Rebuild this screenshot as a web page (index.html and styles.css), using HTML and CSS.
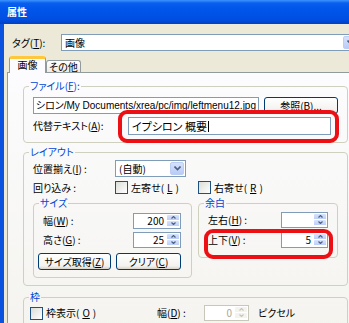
FILE: index.html
```html
<!DOCTYPE html>
<html lang="ja">
<head>
    <meta charset="UTF-8">
    <title>属性</title>
    <link rel="stylesheet" href="styles.css">
</head>
<body>
    <div class="window">
        <!-- タイトルバー -->
        <div class="titlebar">
            <span class="title">属性</span>
        </div>

        <div class="client">
            <div class="tag-row">
                <span class="tag-label">タグ(<u>T</u>):</span>
                <div class="combo combo-tag">
                    <span class="combo-text">画像</span>
                    <span class="drop"><svg width="7" height="5" viewBox="0 0 7 5"><polyline points="0.5,0.5 3.5,3.5 6.5,0.5" fill="none" stroke="#4D6185" stroke-width="1.6"/></svg></span>
                </div>
            </div>

            <div class="tabs">
                <div class="tab active">画像</div>
                <div class="tab">その他</div>
            </div>

            <div class="panel">
                <!-- ファイル -->
                <fieldset class="group group-file">
                    <legend>ファイル(<u>F</u>):</legend>
                    <div class="body">
                        <div class="row">
                            <div class="textbox path"><span>シロン/My Documents/xrea/pc/img/leftmenu12.jpg</span></div>
                            <button class="btn btn-browse">参照(<u>B</u>)...</button>
                        </div>
                        <div class="row row-alt">
                            <span class="label label-alt">代替テキスト(<u>A</u>):</span>
                            <div class="textbox alt">イプシロン 概要<span class="caret"></span></div>
                        </div>
                    </div>
                </fieldset>

                <!-- レイアウト -->
                <fieldset class="group group-layout">
                    <legend>レイアウト</legend>
                    <div class="body">
                        <div class="row row-align">
                            <span class="label label-layout">位置揃え(<u>I</u>) :</span>
                            <div class="combo combo-align">
                                <span class="combo-text">(自動)</span>
                                <span class="drop"><svg width="7" height="5" viewBox="0 0 7 5"><polyline points="0.5,0.5 3.5,3.5 6.5,0.5" fill="none" stroke="#4D6185" stroke-width="1.6"/></svg></span>
                            </div>
                        </div>
                        <div class="row row-wrap">
                            <span class="label label-layout">回り込み :</span>
                            <span class="checkitem check-left"><span class="check"></span>左寄せ(<u>L</u>)</span>
                            <span class="checkitem"><span class="check"></span>右寄せ(<u>R</u>)</span>
                        </div>

                        <div class="subgroups">
                            <fieldset class="group group-size">
                                <legend>サイズ</legend>
                                <div class="body">
                                    <div class="row">
                                        <span class="label label-size">幅(<u>W</u>) :</span>
                                        <div class="spin spin-size">
                                            <span class="spin-val">200</span>
                                            <span class="spin-btns">
                                                <span class="spin-btn"><svg width="5" height="3" viewBox="0 0 5 3"><polyline points="0.5,2.5 2.5,0.5 4.5,2.5" fill="none" stroke="#4D6185" stroke-width="1.2"/></svg></span>
                                                <span class="spin-btn"><svg width="5" height="3" viewBox="0 0 5 3"><polyline points="0.5,0.5 2.5,2.5 4.5,0.5" fill="none" stroke="#4D6185" stroke-width="1.2"/></svg></span>
                                            </span>
                                        </div>
                                    </div>
                                    <div class="row row-next">
                                        <span class="label label-size">高さ(<u>G</u>) :</span>
                                        <div class="spin spin-size">
                                            <span class="spin-val">25</span>
                                            <span class="spin-btns">
                                                <span class="spin-btn"><svg width="5" height="3" viewBox="0 0 5 3"><polyline points="0.5,2.5 2.5,0.5 4.5,2.5" fill="none" stroke="#4D6185" stroke-width="1.2"/></svg></span>
                                                <span class="spin-btn"><svg width="5" height="3" viewBox="0 0 5 3"><polyline points="0.5,0.5 2.5,2.5 4.5,0.5" fill="none" stroke="#4D6185" stroke-width="1.2"/></svg></span>
                                            </span>
                                        </div>
                                    </div>
                                    <div class="row row-buttons">
                                        <button class="btn btn-getsize">サイズ取得(<u>Z</u>)</button>
                                        <button class="btn btn-clear">クリア(<u>C</u>)</button>
                                    </div>
                                </div>
                            </fieldset>

                            <fieldset class="group group-margin">
                                <legend>余白</legend>
                                <div class="body">
                                    <div class="row">
                                        <span class="label label-margin">左右(<u>H</u>) :</span>
                                        <div class="spin spin-margin">
                                            <span class="spin-val"></span>
                                            <span class="spin-btns">
                                                <span class="spin-btn"><svg width="5" height="3" viewBox="0 0 5 3"><polyline points="0.5,2.5 2.5,0.5 4.5,2.5" fill="none" stroke="#4D6185" stroke-width="1.2"/></svg></span>
                                                <span class="spin-btn"><svg width="5" height="3" viewBox="0 0 5 3"><polyline points="0.5,0.5 2.5,2.5 4.5,0.5" fill="none" stroke="#4D6185" stroke-width="1.2"/></svg></span>
                                            </span>
                                        </div>
                                    </div>
                                    <div class="row row-next2">
                                        <span class="label label-margin">上下(<u>V</u>) :</span>
                                        <div class="spin spin-margin">
                                            <span class="spin-val">5</span>
                                            <span class="spin-btns">
                                                <span class="spin-btn"><svg width="5" height="3" viewBox="0 0 5 3"><polyline points="0.5,2.5 2.5,0.5 4.5,2.5" fill="none" stroke="#4D6185" stroke-width="1.2"/></svg></span>
                                                <span class="spin-btn"><svg width="5" height="3" viewBox="0 0 5 3"><polyline points="0.5,0.5 2.5,2.5 4.5,0.5" fill="none" stroke="#4D6185" stroke-width="1.2"/></svg></span>
                                            </span>
                                        </div>
                                    </div>
                                </div>
                            </fieldset>
                        </div>
                    </div>
                </fieldset>

                <!-- 枠 -->
                <fieldset class="group group-border">
                    <legend>枠</legend>
                    <div class="body">
                        <div class="row row-border">
                            <span class="checkitem check-border"><span class="check"></span>枠表示(<u>O</u>)</span>
                            <span class="label label-bwidth">幅(<u>D</u>) :</span>
                            <div class="spin spin-disabled">
                                <span class="spin-val">0</span>
                                <span class="spin-btns">
                                    <span class="spin-btn"><svg width="5" height="3" viewBox="0 0 5 3"><polyline points="0.5,2.5 2.5,0.5 4.5,2.5" fill="none" stroke="#C9C7BA" stroke-width="1.2"/></svg></span>
                                    <span class="spin-btn"><svg width="5" height="3" viewBox="0 0 5 3"><polyline points="0.5,0.5 2.5,2.5 4.5,0.5" fill="none" stroke="#C9C7BA" stroke-width="1.2"/></svg></span>
                                </span>
                            </div>
                            <span class="unit">ピクセル</span>
                        </div>
                    </div>
                </fieldset>
            </div>
        </div>

        <!-- 赤い注釈枠 -->
        <div class="mark mark-alt"></div>
        <div class="mark mark-margin"></div>
    </div>
</body>
</html>
```

FILE: styles.css
```css
/* Windows XP 風ダイアログ */
body {
    margin: 0;
    overflow: hidden;
    background: #ECE9D8;
    font-family: "Noto Sans CJK JP", sans-serif;
    font-size: 10px;
    font-feature-settings: "palt";
    color: #000;
}

.window {
    position: relative;
    width: 364px;
    height: 323px;
    overflow: hidden;
}

/* タイトルバー */
.titlebar {
    height: 24px;
    display: flex;
    align-items: center;
    padding-left: 7px;
    background: linear-gradient(#3D95FF 0, #0A5FEE 3px, #0055EA 40%, #004FE2 80%, #003FC4 100%);
}

.title {
    color: #fff;
    font-weight: bold;
    font-size: 10px;
    line-height: 12px;
}

.client {
    box-sizing: border-box;
    height: 299px;
    border-left: 4px solid #0B52DE;
    padding-top: 10px;
}

/* タグ */
.tag-row {
    display: flex;
    align-items: center;
    height: 17px;
    padding-left: 8px;
}

.tag-label {
    width: 49px;
}

.combo {
    display: flex;
    align-items: center;
    box-sizing: border-box;
    height: 17px;
    border: 1px solid #7F9DB9;
    background: #fff;
}

.combo-tag {
    width: 298px;
}

.combo-text {
    flex: 1;
    padding-left: 3px;
    line-height: 14px;
}

.drop {
    display: flex;
    align-items: center;
    justify-content: center;
    box-sizing: border-box;
    width: 14px;
    height: 13px;
    margin-right: 1px;
    border: 1px solid #BCCDF4;
    border-radius: 2px;
    background: linear-gradient(#D5E1FC, #B9CCF7);
}

/* タブ */
.tabs {
    position: relative;
    z-index: 1;
    display: flex;
    align-items: flex-end;
    height: 17px;
    margin: 5px 0 -1px 5px;
}

.tab {
    box-sizing: border-box;
    border: 1px solid #919B9C;
    border-bottom: none;
    border-radius: 3px 3px 0 0;
    text-align: center;
    line-height: 12px;
}

.tab.active {
    width: 37px;
    height: 17px;
    border-top: 3px solid #FFC83C;
    background: #FCFCFE;
}

.tab:not(.active) {
    width: 35px;
    height: 12px;
    margin-bottom: 1px;
    line-height: 11px;
    background: linear-gradient(#FFFFFF, #ECEBE6);
}

.panel {
    margin: 0 3px;
    border: 1px solid #919B9C;
    background: linear-gradient(#FCFCFE, #F4F3EE);
    padding: 6px 12px 20px 15px;
}

/* グループボックス */
.group {
    margin: 0;
    padding: 0;
    min-width: 0;
    border: 1px solid #D0D0BF;
    border-radius: 4px;
}

.group legend {
    height: 14px;
    padding: 0 1px;
    margin-left: 5px;
    line-height: 14px;
    color: #0046D5;
}

.row {
    display: flex;
    align-items: center;
}

.label {
    line-height: 14px;
}

.textbox {
    box-sizing: border-box;
    border: 1px solid #7F9DB9;
    background: #fff;
    white-space: nowrap;
    overflow: hidden;
}

.group-file .body {
    padding: 4px 9px 7px 9px;
}

.group-file .row {
    height: 17px;
}

.path {
    display: flex;
    justify-content: flex-end;
    width: 226px;
    height: 17px;
    padding-right: 2px;
    font-family: "Liberation Sans", "Noto Sans CJK JP", sans-serif;
    line-height: 15px;
}

.btn {
    box-sizing: border-box;
    height: 17px;
    padding: 0;
    border: 1px solid #003C74;
    border-radius: 3px;
    background: linear-gradient(#FFFFFF, #F3F2EE 80%, #D8D2C6);
    font-family: inherit;
    font-size: 10px;
    font-feature-settings: "palt";
    color: #000;
    line-height: 14px;
}

.btn-browse {
    width: 74px;
    margin-left: 5px;
}

.group-file .row-alt {
    height: 18px;
    margin-top: 3px;
}

.label-alt {
    width: 95px;
}

.alt {
    width: 203px;
    height: 18px;
    padding-left: 3px;
    font-size: 11px;
    line-height: 16px;
}

.caret {
    display: inline-block;
    width: 1px;
    height: 11px;
    margin-left: 1px;
    vertical-align: -1px;
    background: #000;
}

/* レイアウト */
.group-layout {
    margin-top: 2px;
}

.group-layout > .body {
    padding: 1px 9px 7px 9px;
}

.row-align {
    height: 17px;
}

.label-layout {
    width: 82px;
}

.combo-align {
    width: 71px;
}

.row-wrap {
    height: 13px;
    margin-top: 4px;
}

.checkitem {
    display: flex;
    align-items: center;
    gap: 3px;
    line-height: 14px;
}

.check-left {
    width: 83px;
}

.check {
    box-sizing: border-box;
    width: 13px;
    height: 13px;
    border: 1px solid #1C5180;
    background: linear-gradient(135deg, #DCDCD7, #FFFFFF);
}

.subgroups {
    display: flex;
    align-items: flex-start;
    gap: 6px;
    margin-top: 2px;
}

.group-size {
    width: 159px;
    box-sizing: border-box;
}

.group-size .body {
    padding: 3px 10px 7px 0;
}

.group-size .row {
    height: 16px;
    padding-left: 9px;
}

.label-size {
    width: 90px;
}

.row-next {
    margin-top: 3px;
}

.group-size .row-buttons {
    height: 17px;
    margin-top: 5px;
    padding-left: 4px;
}

.btn-getsize {
    width: 73px;
}

.btn-clear {
    width: 65px;
    margin-left: 5px;
}

.group-margin {
    width: 140px;
    box-sizing: border-box;
}

.group-margin .body {
    padding: 2px 9px 9px 9px;
}

.group-margin .row {
    height: 16px;
}

.row-next2 {
    margin-top: 4px;
}

.label-margin {
    width: 73px;
}

/* スピンボックス */
.spin {
    display: flex;
    box-sizing: border-box;
    height: 16px;
    border: 1px solid #7F9DB9;
    background: #fff;
}

.spin-size {
    width: 48px;
}

.spin-margin {
    width: 47px;
}

.spin-val {
    flex: 1;
    padding-right: 3px;
    text-align: right;
    line-height: 14px;
}

.spin-btns {
    display: flex;
    flex-direction: column;
    width: 12px;
    padding: 1px 1px 1px 0;
}

.spin-btn {
    flex: 1;
    display: flex;
    align-items: center;
    justify-content: center;
    border-radius: 1px;
    background: linear-gradient(#D7E3FC, #BDCFF8);
    border-bottom: 1px solid #fff;
}

/* 枠 */
.group-border {
    margin-top: 4px;
}

.group-border .body {
    padding: 1px 6px 8px 6px;
}

.row-border {
    height: 16px;
}

.check-border {
    width: 127px;
}

.label-bwidth {
    width: 47px;
}

.spin-disabled {
    width: 45px;
    border-color: #C9C7BA;
    color: #ACA899;
}

.spin-disabled .spin-btn {
    background: #F4F3EE;
}

.unit {
    margin-left: 9px;
    line-height: 14px;
}

/* 赤い注釈枠 */
.mark {
    position: absolute;
    box-sizing: border-box;
    border: 4px solid #EC0F14;
    border-radius: 9px;
}

.mark-alt {
    left: 118px;
    top: 110px;
    width: 221px;
    height: 33px;
}

.mark-margin {
    left: 204px;
    top: 229px;
    width: 129px;
    height: 30px;
}
```
